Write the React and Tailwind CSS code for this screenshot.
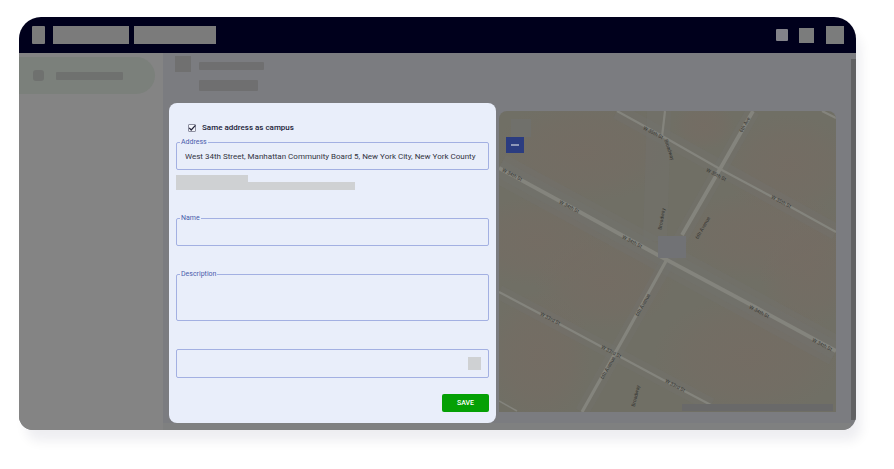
const streets = [
  { d: "M118 0 L165 26 L221 58 L281 90 L337 121", w: 2.2 },
  { d: "M0 57 L79 100 L157 143 L256 196 L337 240", w: 3.8 },
  { d: "M0 181 L51 208 L116 243 L168 271 L212 294", w: 2.2 },
  { d: "M0 290 L18 300", w: 1.5 },
  { d: "M323 0 L337 7", w: 2.2 },
  { d: "M254 0 L221 58 L183 124", w: 3.8 },
  { d: "M167 150 L129 219 L115 244 L83 301", w: 3.2 },
  { d: "M166 0 L163 26", w: 2.2 },
];

const streetNames = [
  { x: 13, y: 64, r: 28, t: "W 34th St" },
  { x: 70, y: 96, r: 28, t: "W 34th St" },
  { x: 133, y: 131, r: 28, t: "W 34th St" },
  { x: 260, y: 201, r: 28, t: "W 34th St" },
  { x: 323, y: 234, r: 28, t: "W 34th St" },
  { x: 154, y: 22, r: 28, t: "W 35th St" },
  { x: 217, y: 64, r: 28, t: "W 35th St" },
  { x: 282, y: 91, r: 28, t: "W 35th St" },
  { x: 51, y: 208, r: 28, t: "W 33rd St" },
  { x: 112, y: 241, r: 28, t: "W 33rd St" },
  { x: 176, y: 275, r: 28, t: "W 33rd St" },
  { x: 246, y: 14, r: -60, t: "6th Ave" },
  { x: 204, y: 117, r: -60, t: "6th Avenue" },
  { x: 144, y: 194, r: -60, t: "6th Avenue" },
  { x: 109, y: 257, r: -60, t: "6th Avenue" },
  { x: 170, y: 39, r: 72, t: "Broadway" },
  { x: 163, y: 108, r: -80, t: "Broadway" },
  { x: 137, y: 285, r: -76, t: "Broadway" },
];

const blocks = [
  { cx: 85, cy: 40, rx: 90, ry: 52 },
  { cx: 290, cy: 55, rx: 66, ry: 52 },
  { cx: 205, cy: 15, rx: 32, ry: 24 },
  { cx: 265, cy: 125, rx: 90, ry: 46 },
  { cx: 40, cy: 130, rx: 76, ry: 46 },
  { cx: 105, cy: 170, rx: 70, ry: 50 },
  { cx: 40, cy: 245, rx: 54, ry: 66 },
  { cx: 250, cy: 245, rx: 96, ry: 60 },
  { cx: 310, cy: 160, rx: 50, ry: 56 },
];

function StreetMap() {
  return (
    <svg
      className="block h-full w-full"
      viewBox="0 0 337 301"
      preserveAspectRatio="xMidYMid slice"
      role="img"
      aria-label="Map"
    >
      <defs>
        <radialGradient id="block">
          <stop offset="0" stopColor="#756c63" stopOpacity="0.8" />
          <stop offset="0.6" stopColor="#756c63" stopOpacity="0.5" />
          <stop offset="1" stopColor="#756c63" stopOpacity="0" />
        </radialGradient>
      </defs>
      <rect width="337" height="301" fill="#706f65" />
      {blocks.map((b, i) => (
        <ellipse key={i} {...b} fill="url(#block)" />
      ))}
      <g fill="none" stroke="#72736f" strokeOpacity="0.35">
        <path d="M0 57 L337 240" strokeWidth="30" />
        <path d="M0 57 L337 240" strokeWidth="18" />
        <path d="M118 0 L337 121" strokeWidth="16" />
        <path d="M0 181 L212 294" strokeWidth="14" />
        <path d="M254 0 L83 301" strokeWidth="14" />
        <path d="M160 0 L156 130" strokeWidth="24" />
      </g>
      <rect x="12" y="8" width="20" height="18" fill="#6f7270" fillOpacity="0.6" />
      <g fill="none" stroke="#84847d">
        {streets.map((s) => (
          <path key={s.d} d={s.d} strokeWidth={s.w} strokeLinejoin="round" />
        ))}
      </g>
      <rect x="159" y="125" width="28" height="22" fill="#717275" />
      <g fill="#353532" fontSize="5" textAnchor="middle" dominantBaseline="middle">
        {streetNames.map((n, i) => (
          <text key={i} transform={`translate(${n.x} ${n.y}) rotate(${n.r})`}>
            {n.t}
          </text>
        ))}
      </g>
      <rect x="183" y="293" width="151" height="7" fill="#696969" />
    </svg>
  );
}

function Field({ id, label, children }) {
  return (
    <div className="relative">
      <label
        htmlFor={id}
        className="absolute -top-1 left-1 bg-[#e9eefa] px-px text-[7px] leading-2 text-[#4a5cab]"
      >
        {label}
      </label>
      {children}
    </div>
  );
}

const box =
  "block w-full rounded-xs border border-[#a3b0e2] bg-transparent px-2 text-[8px] leading-3 text-[#33343f] outline-none";

function AddressForm() {
  return (
    <form
      className="flex flex-col rounded-lg bg-[#e9eefa] px-[7px] pt-5 pb-[11px]"
      onSubmit={(e) => e.preventDefault()}
    >
      <label className="flex h-2.5 items-center gap-1.5 pl-3 text-[8px] font-medium text-[#1b1c38]">
        <span className="relative flex size-2">
          <input
            type="checkbox"
            defaultChecked
            className="peer size-2 appearance-none rounded-[1px] border border-[#8d8fa0] bg-[#f4f6fc]"
          />
          <svg
            viewBox="0 0 8 8"
            className="pointer-events-none absolute inset-0 hidden size-2 peer-checked:block"
            fill="none"
            stroke="#22233a"
            strokeWidth="1.2"
          >
            <path d="M1.2 3.8 L3.2 6 L7.4 1.4" />
          </svg>
        </span>
        Same address as campus
      </label>

      <div className="mt-[9px]">
        <Field id="address" label="Address">
          <input
            id="address"
            className={`${box} h-7`}
            defaultValue="West 34th Street, Manhattan Community Board 5, New York City, New York County"
          />
        </Field>
      </div>
      <div className="mt-[5px] flex h-[15px] items-end">
        <div className="h-full w-[72px] bg-[#cfd1d3]" />
        <div className="h-2 w-[107px] bg-[#cfd1d3]" />
      </div>

      <div className="mt-7 flex flex-col gap-7">
        <Field id="name" label="Name">
          <input id="name" className={`${box} h-7`} />
        </Field>
        <Field id="description" label="Description">
          <textarea id="description" className={`${box} h-[47px] resize-none py-2`} />
        </Field>
        <div className="relative">
          <select aria-label="Option" className={`${box} h-[29px] appearance-none`}>
            <option value=""></option>
          </select>
          <div className="pointer-events-none absolute top-2 right-2 size-[13px] bg-[#cfd1d3]" />
        </div>
      </div>

      <button
        type="submit"
        className="mt-4 h-[18px] w-[47px] self-end rounded-xs bg-[#05a005] text-[7px] font-medium text-white"
      >
        SAVE
      </button>
    </form>
  );
}

export default function App() {
  return (
    <div className="bg-white pt-[17px] pr-[38px] pb-10 pl-[19px] font-[family-name:Roboto,'Liberation_Sans',sans-serif]">
      <div className="rounded-t-[22px] rounded-b-[14px] shadow-[6px_12px_12px_-1px_rgba(20,20,50,0.07)]">
        <div className="overflow-hidden rounded-t-[22px] rounded-b-[14px]">
          <header className="flex h-9 items-center bg-[#00001c] pr-3 pl-[13px]">
            <div className="h-[18px] w-[13px] rounded-[1px] bg-[#7b7b7b]" />
            <div className="ml-2 h-[18px] w-[76px] bg-[#7b7b7b]" />
            <div className="ml-[5px] h-[18px] w-[82px] bg-[#7b7b7b]" />
            <div className="ml-auto size-3 rounded-[1px] bg-[#83838a]" />
            <div className="ml-[11px] size-[15px] bg-[#7b7c7c]" />
            <div className="ml-3 size-[18px] bg-[#7b7c7c]" />
          </header>

          <div className="flex bg-[#7b7c80]">
            <nav className="w-36 shrink-0 bg-[#848484] pt-1">
              <div className="flex h-[37px] w-[136px] items-center gap-3 rounded-r-full bg-[#7b807b] pl-3.5">
                <div className="size-[11px] rounded-[3px] bg-[#6f716f]" />
                <div className="h-2 w-[67px] rounded-[1px] bg-[#6f716f]" />
              </div>
            </nav>

            <main className="min-w-0 flex-1 border-b-[7px] border-[#7f8080] pr-[15px] pl-1.5">
              <div className="flex h-[50px] gap-2 pt-[3px] pl-1.5">
                <div className="size-4 bg-[#707070]" />
                <div className="pt-1.5">
                  <div className="h-2 w-[65px] rounded-[1px] bg-[#6f6f70]" />
                  <div className="mt-2.5 h-[11px] w-[59px] rounded-[1px] bg-[#6f6f70]" />
                </div>
              </div>
              <div className="grid grid-cols-[327fr_337fr] gap-[3px]">
                <AddressForm />
                <div className="relative mt-2 mb-[11px] overflow-hidden rounded-t-lg">
                  <StreetMap />
                  <button
                    type="button"
                    aria-label="Zoom out"
                    className="absolute top-[26px] left-[7px] flex h-4 w-[18px] items-center justify-center bg-[#2b3c80]"
                  >
                    <span className="h-0.5 w-2 bg-[#8e97b8]" />
                  </button>
                </div>
              </div>
            </main>

            <div className="mt-1.5 mb-2.5 w-[5px] bg-[#616163]" />
          </div>
        </div>
      </div>
    </div>
  );
}
